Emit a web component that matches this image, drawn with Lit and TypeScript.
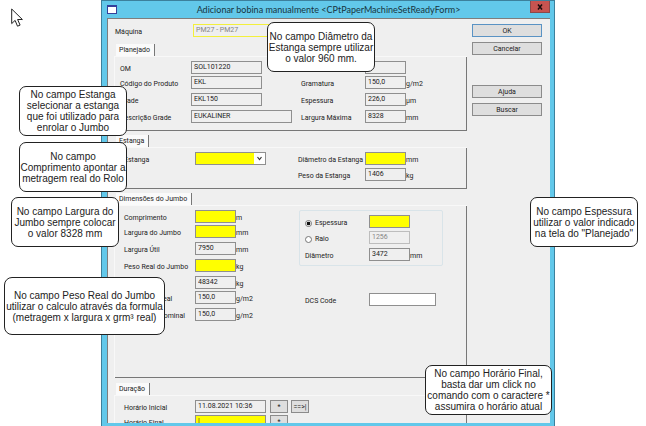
import { LitElement, html, css, svg } from "lit";
import { customElement } from "lit/decorators.js";
import { classMap } from "lit/directives/class-map.js";

type Kind = "plain" | "required" | "disabled" | "open";

interface FieldSpec {
  id: string;
  label: string;
  value?: string;
  unit?: string;
  kind?: Kind;
  size?: "s" | "m" | "l" | "xl";
}

const planned: FieldSpec[] = [
  { id: "om", label: "OM", value: "SOL101220", size: "l" },
  { id: "serie", label: "Série" },
  { id: "produto", label: "Código do Produto", value: "EKL", size: "l" },
  { id: "gramatura", label: "Gramatura", value: "150,0", unit: "g/m2" },
  { id: "grade", label: "Grade", value: "EKL150", size: "l" },
  { id: "espessura-plan", label: "Espessura", value: "226,0", unit: "µm" },
  { id: "descricao", label: "Descrição Grade", value: "EUKALINER", size: "xl" },
  { id: "largura-max", label: "Largura Máxima", value: "8328", unit: "mm" },
];

const jumbo: FieldSpec[] = [
  { id: "comprimento", label: "Comprimento", unit: "m", kind: "required" },
  { id: "largura", label: "Largura do Jumbo", unit: "mm", kind: "required" },
  { id: "largura-util", label: "Largura Útil", value: "7950", unit: "mm" },
  { id: "peso-real", label: "Peso Real do Jumbo", unit: "kg", kind: "required" },
  { id: "peso-calc", label: "Peso", value: "48342", unit: "kg" },
  { id: "gram-real", label: "Gramatura Real", value: "150,0", unit: "g/m2" },
  { id: "gram-nominal", label: "Gramatura Nominal", value: "150,0", unit: "g/m2" },
];

const notes: { place: string; lines: string[] }[] = [
  { place: "diametro", lines: ["No campo Diâmetro da", "Estanga sempre utilizar", "o valor 960 mm."] },
  { place: "estanga", lines: ["No campo Estanga", "selecionar a estanga", "que foi utilizado para", "enrolar o Jumbo"] },
  { place: "comprimento", lines: ["No campo", "Comprimento apontar a", "metragem real do Rolo"] },
  { place: "largura", lines: ["No campo Largura do", "Jumbo sempre colocar", "o valor 8328 mm"] },
  { place: "peso", lines: ["No campo Peso Real do Jumbo", "utilizar o calculo através da formula", "(metragem x largura x grm³ real)"] },
  { place: "espessura", lines: ["No campo Espessura", "utilizar o valor indicado", "na tela do \"Planejado\""] },
  { place: "horario", lines: ["No campo Horário Final,", "basta dar um click no", "comando com o caractere *", "assumira o horário atual"] },
];

@customElement("app-root")
export class AppRoot extends LitElement {
  static styles = css`
    :host {
      display: block;
      position: relative;
      height: 100vh;
      overflow: hidden;
      background: #fff;
      color: #222;
      font: 7px/10px "Roboto", "Liberation Sans", sans-serif;
    }
    * { box-sizing: border-box; }
    .dialog {
      display: flex;
      flex-direction: column;
      height: 100%;
      margin: 0 91px 0 101px;
      padding: 0 4px 3px 5px;
      background: #62c8ea;
      border: solid #3c809c;
      border-width: 1px 1px 0 1px;
    }
    .titlebar { display: flex; align-items: center; height: 17px; flex: none; }
    .titlebar svg { display: block; flex: none; }
    .titlebar h1 {
      flex: 1;
      margin: 0;
      padding-left: 10px;
      text-align: center;
      font: 9px/16px "Lato", sans-serif;
      color: #173440;
      white-space: nowrap;
    }
    .close {
      align-self: flex-start;
      width: 20px;
      height: 12px;
      padding: 0;
      border: 1px solid #8c4a4a;
      border-top: 0;
      background: #c75450;
      display: grid;
      place-items: center;
    }
    .content {
      flex: 1;
      min-height: 0;
      display: flex;
      gap: 5px;
      overflow: hidden;
      padding: 5px 8px 0 6px;
      background: #efefef;
      border: solid #7d7d7d;
      border-width: 1px 0 0 1px;
    }
    .form { flex: 1; min-width: 0; }
    .side { width: 70px; flex: none; display: flex; flex-direction: column; gap: 5px; }
    .side .help { margin-top: 25px; }
    button.cmd {
      height: 13px;
      flex: none;
      padding: 0;
      border: 1px solid #8b8b8b;
      background: #dedede;
      color: #222;
      font: inherit;
    }
    button.default { border-color: #5a93c4; }
    .mini { width: 18px; }
    .machine { display: grid; grid-template-columns: 78px 1fr; padding-left: 1px; height: 20px; }
    label, .unit { line-height: 16px; white-space: nowrap; }
    input.text, select {
      height: 13px;
      padding: 0 0 1px 2px;
      margin: 0;
      border: 1px solid #8f8f8f;
      border-radius: 0;
      background: #efefef;
      color: #222;
      font: inherit;
      outline: 0;
    }
    input.s { width: 41px; }
    input.m { width: 67px; }
    input.l { width: 71px; }
    input.xl { width: 101px; }
    input.required, select { background: #ff0; }
    input.disabled { color: #858585; border-color: #bdbdbd; }
    input.open { background: #fff; }
    input.highlight { color: #858585; border: 1px solid #f3f03c; }
    .cell { display: flex; align-items: flex-start; }
    .tab {
      width: max-content;
      height: 12px;
      margin: 0 0 0 2px;
      padding: 0 4px 0 3px;
      background: #fafafa;
      border-right: 1px solid #777;
      font: inherit;
      line-height: 12px;
    }
    .body {
      border: solid #f8f8f8;
      border-width: 1px 0 0 1px;
      box-shadow: inset -1px -1px #777;
      padding: 4px 0 0 9px;
    }
    .grid { display: grid; align-items: start; }
    .planned .grid {
      grid-template-columns: 71px 110px 64px 1fr;
      grid-template-rows: 15px 17px 17px 21px;
    }
    .planned .body { padding-left: 5px; }
    .roll { margin-top: 4px; }
    .roll .grid { grid-template-columns: 71px 103px 67px 1fr; grid-template-rows: 16px 21px; }
    .size { margin-top: 4px; }
    .size .body { display: flex; height: 173px; }
    .size .left {
      width: 175px;
      grid-template-columns: 71px 1fr;
      grid-template-rows: 15px 17px 17px 17px 15px 17px 17px;
      align-content: start;
    }
    .time { margin-top: 5px; }
    .time .body { height: 60px; }
    .time .grid { grid-template-columns: 71px 75px 21px 1fr; grid-auto-rows: 15px; }
    .thickness {
      width: 144px;
      height: 56px;
      margin: 0 0 27px;
      padding: 4px 0 0 4px;
      border: 1px solid #d9e4e9;
      border-radius: 2px;
      display: grid;
      align-items: start;
      grid-template-columns: 65px 1fr;
      grid-template-rows: 16px 17px 17px;
    }
    .thickness > label { padding-left: 1px; }
    .option { display: flex; align-items: center; gap: 3px; height: 16px; }
    .option input {
      appearance: none;
      width: 7px;
      height: 7px;
      margin: 0;
      border: 1px solid #777;
      border-radius: 50%;
      background: #fff;
    }
    .option input:checked { background: radial-gradient(#111 45%, #fff 60%); }
    .dcs { display: grid; grid-template-columns: 64px 1fr; padding-left: 6px; }
    .combo { position: relative; width: 71px; height: 13px; }
    .combo select { display: block; width: 100%; appearance: none; }
    .combo svg { position: absolute; top: 1px; right: 1px; pointer-events: none; }
    .pointer { position: absolute; left: 11px; top: 8px; }
    .note {
      position: absolute;
      display: grid;
      place-content: center;
      width: 108px;
      height: 50px;
      margin: 0;
      border: 1px solid #222;
      border-radius: 7px;
      background: #fff;
      font: 10px/11px "Liberation Sans", sans-serif;
      text-align: center;
      white-space: pre;
    }
    .note.diametro { left: 267px; top: 22px; }
    .note.estanga { left: 19px; top: 86px; }
    .note.comprimento { left: 19px; top: 142px; }
    .note.largura { left: 11px; top: 197px; }
    .note.peso { left: 4px; top: 277px; width: 161px; height: 58px; border-radius: 8px; }
    .note.espessura { right: 8px; top: 197px; }
    .note.horario { right: 94px; top: 365px; width: 127px; }
  `;

  private input(f: FieldSpec) {
    const kind = f.kind ?? "plain";
    return html`<span class="cell"
      ><input
        id=${f.id}
        type="text"
        class=${classMap({ text: true, [f.size ?? "s"]: true, [kind]: true })}
        .value=${f.value ?? ""}
        aria-label=${f.label}
        ?readonly=${kind === "plain"}
        ?disabled=${kind === "disabled"}
      />${f.unit ? html`<span class="unit">${f.unit}</span>` : null}</span>`;
  }

  private row(f: FieldSpec) {
    return html`<label for=${f.id}>${f.label}</label>${this.input(f)}`;
  }

  render() {
    return html`
      <section class="dialog">
        <header class="titlebar">
          <svg width="10" height="9" viewBox="0 0 10 9">
            <rect x=".5" y=".5" width="9" height="8" fill="#fff" stroke="#34409a" />
            <path d="M0 1h10" stroke="#34409a" stroke-width="2" />
          </svg>
          <h1>Adicionar bobina manualmente &lt;CPtPaperMachineSetReadyForm&gt;</h1>
          <button class="close" aria-label="Fechar">
            <svg width="6" height="6" viewBox="0 0 6 6">
              <path d="M1 .5l4 5M5 .5l-4 5" stroke="#1c0c0c" stroke-width="1.5" />
            </svg>
          </button>
        </header>

        <div class="content">
          <form class="form" @submit=${(e: Event) => e.preventDefault()}>
            <div class="machine">
              <label for="maquina">Máquina</label>
              <span class="cell"><input id="maquina" class="text highlight xl" type="text" .value=${"PM27 - PM27"} readonly /></span>
            </div>

            <section class="planned">
              <h2 class="tab">Planejado</h2>
              <div class="body"><div class="grid">${planned.map((f) => this.row(f))}</div></div>
            </section>

            <section class="roll">
              <h2 class="tab">Estanga</h2>
              <div class="body">
                <div class="grid">
                  <label for="estanga">Estanga</label>
                  <span class="combo">
                    <select id="estanga"><option></option></select>
                    ${svg`<svg width="11" height="11" viewBox="0 0 11 11"><rect width="11" height="11" fill="#fff"/><path d="M3.5 4l2 2.5 2-2.5" fill="none" stroke="#333" stroke-width="1.2"/></svg>`}
                  </span>
                  ${this.row({ id: "diametro-est", label: "Diâmetro da Estanga", unit: "mm", kind: "required" })}
                  <span></span><span></span>
                  ${this.row({ id: "peso-est", label: "Peso da Estanga", value: "1406", unit: "kg" })}
                </div>
              </div>
            </section>

            <section class="size">
              <h2 class="tab">Dimensões do Jumbo</h2>
              <div class="body">
                <div class="grid left">${jumbo.map((f) => this.row(f))}</div>
                <div>
                  <div class="thickness">
                    <label class="option"><input type="radio" name="modo" checked />Espessura</label>
                    ${this.input({ id: "espessura", label: "Espessura", kind: "required" })}
                    <label class="option"><input type="radio" name="modo" />Raio</label>
                    ${this.input({ id: "raio", label: "Raio", value: "1256", kind: "disabled" })}
                    ${this.row({ id: "diametro", label: "Diâmetro", value: "3472", unit: "mm" })}
                  </div>
                  <div class="dcs">${this.row({ id: "dcs", label: "DCS Code", kind: "open", size: "m" })}</div>
                </div>
              </div>
            </section>

            <section class="time">
              <h2 class="tab">Duração</h2>
              <div class="body">
                <div class="grid">
                  ${this.row({ id: "inicio", label: "Horário Inicial", value: "11.08.2021 10:36", size: "l" })}
                  <button class="cmd mini" type="button">*</button>
                  <button class="cmd mini" type="button">==&gt;|</button>
                  ${this.row({ id: "fim", label: "Horário Final", value: "|", kind: "required", size: "l" })}
                  <button class="cmd mini" type="button">*</button>
                </div>
              </div>
            </section>
          </form>

          <div class="side">
            <button class="cmd default">OK</button>
            <button class="cmd">Cancelar</button>
            <button class="cmd help">Ajuda</button>
            <button class="cmd">Buscar</button>
          </div>
        </div>
      </section>

      ${notes.map((n) => html`<p class="note ${n.place}">${n.lines.join("\n")}</p>`)}

      <svg class="pointer" width="13" height="20" viewBox="0 0 13 20">
        <path d="M.7 1v14.6l3.4-3.2 2.4 5.8 2.6-1.1-2.5-5.6h4.8z" fill="#fff" stroke="#222" />
      </svg>
    `;
  }
}
